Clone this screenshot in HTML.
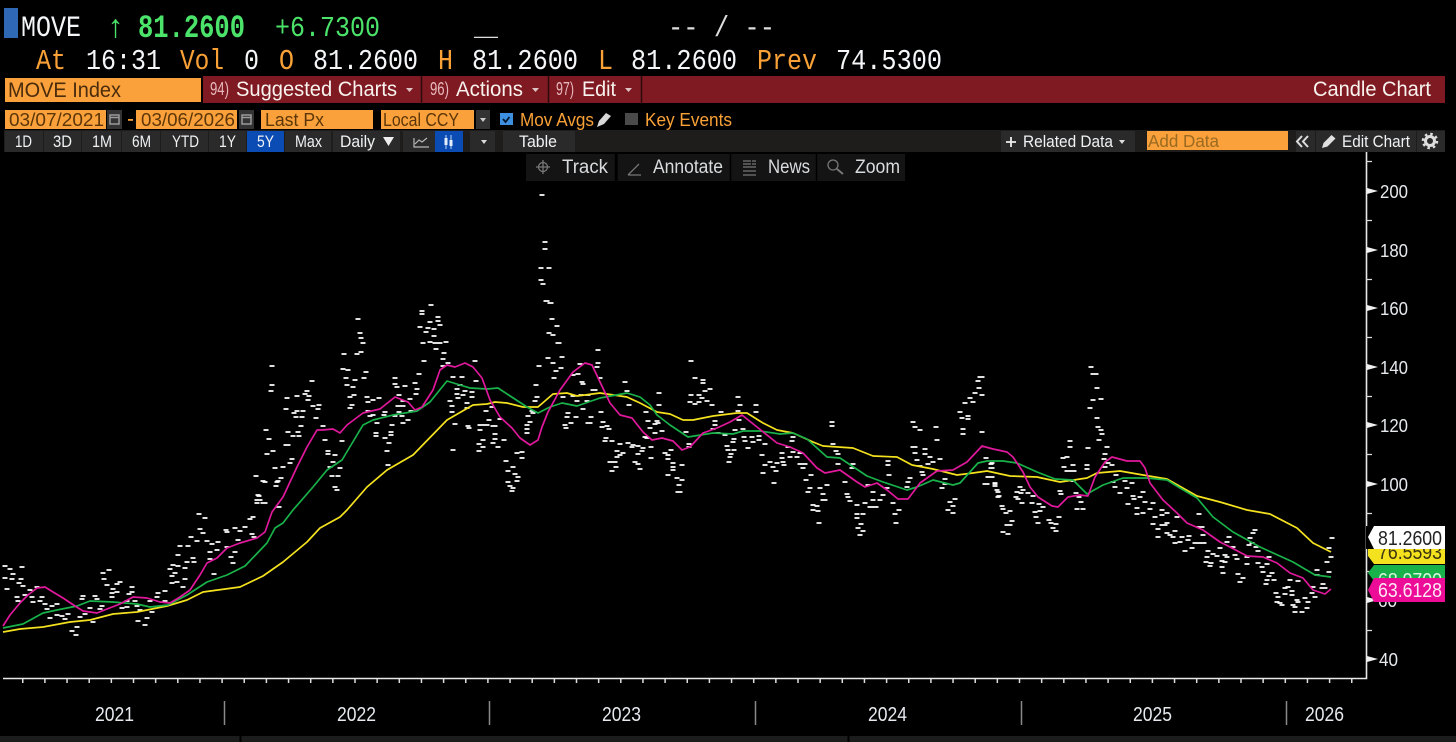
<!DOCTYPE html>
<html><head><meta charset="utf-8"><title>MOVE Index Candle Chart</title>
<style>
html,body{margin:0;padding:0;background:#000;width:1456px;height:742px;overflow:hidden}
svg{display:block;position:absolute;left:0;top:0}
text{white-space:pre}
.m{font-family:"Liberation Mono",monospace;font-size:25px}
.s{font-family:"Liberation Sans",sans-serif}
.o{fill:#f9a137}.w{fill:#f4f6f8}
</style></head><body>
<svg width="1456" height="742" viewBox="0 0 1456 742" xmlns="http://www.w3.org/2000/svg" font-family="Liberation Sans, sans-serif">
<rect width="1456" height="742" fill="#000"/>
<!-- header -->
<rect x="4" y="8" width="14" height="30" fill="#2f68b4"/>
<g class="m">
<text x="21" y="36" class="w" textLength="60" lengthAdjust="spacingAndGlyphs" style="font-size:30px">MOVE</text>
<text x="106" y="37" fill="#4be36a" style="font-size:32px" textLength="19" lengthAdjust="spacingAndGlyphs">↑</text>
<text x="138" y="37" fill="#4be36a" font-weight="bold" style="font-size:32px" textLength="107" lengthAdjust="spacingAndGlyphs">81.2600</text>
<text x="275" y="36" fill="#4be36a" style="font-size:29px" textLength="105" lengthAdjust="spacingAndGlyphs">+6.7300</text>
<text x="474" y="35" fill="#ddd" style="font-size:27px" textLength="24" lengthAdjust="spacingAndGlyphs">__</text>
<text x="668" y="36" fill="#ddd" style="font-size:29px" textLength="107" lengthAdjust="spacingAndGlyphs">-- / --</text>
<g style="font-size:29px">
<text x="36" y="69" class="o" textLength="30" lengthAdjust="spacingAndGlyphs">At</text>
<text x="86" y="69" class="w" textLength="75" lengthAdjust="spacingAndGlyphs">16:31</text>
<text x="180" y="69" class="o" textLength="44" lengthAdjust="spacingAndGlyphs">Vol</text>
<text x="244" y="69" class="w" textLength="15" lengthAdjust="spacingAndGlyphs">0</text>
<text x="279" y="69" class="o" textLength="15" lengthAdjust="spacingAndGlyphs">O</text>
<text x="313" y="69" class="w" textLength="105" lengthAdjust="spacingAndGlyphs">81.2600</text>
<text x="438" y="69" class="o" textLength="15" lengthAdjust="spacingAndGlyphs">H</text>
<text x="472" y="69" class="w" textLength="106" lengthAdjust="spacingAndGlyphs">81.2600</text>
<text x="598" y="69" class="o" textLength="15" lengthAdjust="spacingAndGlyphs">L</text>
<text x="631" y="69" class="w" textLength="106" lengthAdjust="spacingAndGlyphs">81.2600</text>
<text x="757" y="69" class="o" textLength="60" lengthAdjust="spacingAndGlyphs">Prev</text>
<text x="836" y="69" class="w" textLength="106" lengthAdjust="spacingAndGlyphs">74.5300</text>
</g></g>
<!-- red bar -->
<rect x="5" y="78" width="196" height="24" fill="#fba13b"/>
<rect x="203" y="76" width="1242" height="27" fill="#7f1a22"/>
<path d="M421.500 76v27M548.500 76v27M641.500 76v27" stroke="#2a0a0e" stroke-width="1.500"/>
<text x="8" y="97" font-size="21" fill="#4a2c0c" textLength="113" lengthAdjust="spacingAndGlyphs">MOVE Index</text>
<g font-size="18" fill="#e7b9bd">
<text x="210" y="95" textLength="19" lengthAdjust="spacingAndGlyphs">94)</text>
<text x="430" y="95" textLength="19" lengthAdjust="spacingAndGlyphs">96)</text>
<text x="556" y="95" textLength="18" lengthAdjust="spacingAndGlyphs">97)</text>
</g>
<g font-size="21.500" fill="#f8f3ee">
<text x="236" y="96" textLength="161" lengthAdjust="spacingAndGlyphs">Suggested Charts</text>
<text x="456" y="96" textLength="67" lengthAdjust="spacingAndGlyphs">Actions</text>
<text x="582" y="96" textLength="34" lengthAdjust="spacingAndGlyphs">Edit</text>
<text x="1313" y="96" textLength="118" lengthAdjust="spacingAndGlyphs">Candle Chart</text>
</g>
<path d="M406 88h7l-3.500 4zM532 88h7l-3.500 4zM625 88h7l-3.500 4z" fill="#ddc5c5"/>
<!-- row 3 -->
<rect x="5" y="110" width="101" height="19" fill="#fba13b"/>
<rect x="136" y="110" width="101" height="19" fill="#fba13b"/>
<rect x="261" y="110" width="112" height="19" fill="#fba13b"/>
<rect x="381" y="110" width="93" height="19" fill="#fba13b"/>
<g fill="#333"><rect x="107" y="110" width="15" height="19"/><rect x="239" y="110" width="15" height="19"/><rect x="476" y="110" width="14" height="19"/></g>
<path d="M110 115h9v9h-9zM110 117.500h9M242 115h9v9h-9zM242 117.500h9" stroke="#9a9a9a" stroke-width="1.500" fill="none"/>
<path d="M480 118h6l-3 4z" fill="#ccc"/>
<rect x="128" y="119" width="5" height="1.800" fill="#f9a137"/>
<g font-size="18" fill="#5c3608">
<text x="9" y="126" textLength="95" lengthAdjust="spacingAndGlyphs">03/07/2021</text>
<text x="141" y="126" textLength="94" lengthAdjust="spacingAndGlyphs">03/06/2026</text>
<text x="265" y="126" textLength="59" lengthAdjust="spacingAndGlyphs">Last Px</text>
<text x="383" y="126" textLength="76" lengthAdjust="spacingAndGlyphs">Local CCY</text>
</g>
<rect x="500" y="113" width="13" height="12" fill="#3d8fe0"/>
<path d="M503 119l2.500 3 4-5" stroke="#04162c" stroke-width="1.800" fill="none"/>
<text x="520" y="126" font-size="18" fill="#f9a137" textLength="74" lengthAdjust="spacingAndGlyphs">Mov Avgs</text>
<path d="M597 127l2-6 7-8 5 3-7 8z" fill="#d8d8d8"/>
<rect x="625" y="113" width="13" height="12" fill="#4a4a4a"/>
<text x="645" y="126" font-size="18" fill="#f9a137" textLength="87" lengthAdjust="spacingAndGlyphs">Key Events</text>
<!-- row 4 -->
<rect x="4" y="130" width="1441" height="22" fill="#1f1d1b"/>
<g fill="#2a2a2a">
<rect x="5" y="131" width="38" height="21"/><rect x="44" y="131" width="37" height="21"/><rect x="82" y="131" width="39" height="21"/><rect x="122" y="131" width="38" height="21"/><rect x="161" y="131" width="47" height="21"/><rect x="209" y="131" width="37" height="21"/><rect x="285" y="131" width="46" height="21"/><rect x="333" y="131" width="67" height="21"/><rect x="403" y="131" width="32" height="21"/><rect x="470" y="131" width="25" height="21"/><rect x="503" y="131" width="72" height="21"/><rect x="1001" y="131" width="134" height="21"/><rect x="1296" y="131" width="19" height="21"/><rect x="1316" y="131" width="100" height="21"/><rect x="1417" y="131" width="28" height="21"/>
</g>
<rect x="247" y="131" width="37" height="21" fill="#0b4cb4"/>
<rect x="435" y="131" width="28" height="21" fill="#0b4cb4"/>
<g font-size="17" fill="#f0f2f4" text-anchor="start">
<text x="15" y="147" textLength="17" lengthAdjust="spacingAndGlyphs">1D</text>
<text x="53" y="147" textLength="19" lengthAdjust="spacingAndGlyphs">3D</text>
<text x="92" y="147" textLength="20" lengthAdjust="spacingAndGlyphs">1M</text>
<text x="132" y="147" textLength="19" lengthAdjust="spacingAndGlyphs">6M</text>
<text x="172" y="147" textLength="27" lengthAdjust="spacingAndGlyphs">YTD</text>
<text x="219" y="147" textLength="17" lengthAdjust="spacingAndGlyphs">1Y</text>
<text x="257" y="147" textLength="17" lengthAdjust="spacingAndGlyphs">5Y</text>
<text x="295" y="147" textLength="27" lengthAdjust="spacingAndGlyphs">Max</text>
<text x="340" y="147" textLength="35" lengthAdjust="spacingAndGlyphs">Daily</text>
<text x="519" y="147" textLength="38" lengthAdjust="spacingAndGlyphs">Table</text>
<text x="1023" y="147" textLength="90" lengthAdjust="spacingAndGlyphs">Related Data</text>
<text x="1342" y="147" textLength="68" lengthAdjust="spacingAndGlyphs">Edit Chart</text>
</g>
<path d="M383 137h11l-5.500 9z" fill="#eee"/>
<path d="M414 138v9h15M415 144l4-4 3 2 5-4" stroke="#b8b8b8" stroke-width="1.200" fill="none"/>
<path d="M446 135v14M451 135v14" stroke="#b9d3f2" stroke-width="1"/><rect x="444.500" y="138" width="3" height="7" fill="#e6eefb"/><rect x="449.500" y="140" width="3" height="6" fill="#e6eefb"/>
<path d="M481 140h6l-3 4zM1119 140h6l-3 4z" fill="#ddd"/>
<path d="M1006 142h10M1011 137v10" stroke="#eee" stroke-width="1.800"/>
<rect x="1147" y="131" width="141" height="19" fill="#fba13b"/>
<text x="1148" y="147" font-size="17.500" fill="#9a6a20" textLength="71" lengthAdjust="spacingAndGlyphs">Add Data</text>
<path d="M1302 136l-5 5.500 5 5.500M1308 136l-5 5.500 5 5.500" stroke="#ddd" stroke-width="2" fill="none"/>
<path d="M1322 148l1.500-5 8-8 4 3.500-8 8z" fill="#e0e0e0"/>
<circle cx="1430" cy="141" r="4.500" fill="none" stroke="#ddd" stroke-width="3"/>
<circle cx="1430" cy="141" r="7" fill="none" stroke="#ddd" stroke-width="2.500" stroke-dasharray="2.500 3"/>
<!-- track row -->
<rect x="526" y="154" width="379" height="27" fill="#141414"/>
<path d="M615.500 154v27M617 154v27M730.500 154v27M816.500 154v27" stroke="#000" stroke-width="1.500"/>
<g font-size="19" fill="#d9dcdf">
<text x="562" y="173" textLength="46" lengthAdjust="spacingAndGlyphs">Track</text>
<text x="653" y="173" textLength="70" lengthAdjust="spacingAndGlyphs">Annotate</text>
<text x="768" y="173" textLength="42" lengthAdjust="spacingAndGlyphs">News</text>
<text x="855" y="173" textLength="45" lengthAdjust="spacingAndGlyphs">Zoom</text>
</g>
<g stroke="#777" fill="none" stroke-width="1.300">
<circle cx="543" cy="167" r="4.500"/><path d="M536 167h14M543 160v14"/>
<path d="M628 175l11-11M628 175h13"/>
<path d="M743 161h8M743 164h8M743 167h13M743 171h13M743 175h13M752 161h4M752 164h4"/>
<circle cx="833" cy="165" r="5"/><path d="M837 169l6 5" stroke-width="2"/>
</g>
<!-- axes -->
<path d="M3 678.500H1366.500V152" stroke="#e8e8e8" stroke-width="1.600" fill="none"/>
<line x1="22" y1="681" x2="1366" y2="681" stroke="#ddd" stroke-width="4" stroke-dasharray="1.500 20.650"/>
<path d="M224.500 701v24M489.500 701v24M755.500 701v24M1021.500 701v24M1286.500 701v24" stroke="#8a8a8a" stroke-width="1.500"/>
<path d="M1366 161.500h6M1366 220.500h6M1366 279.500h6M1366 337.500h6M1366 396.500h6M1366 454.500h6M1366 513.500h6M1366 571.500h6M1366 630.500h6" stroke="#ddd" stroke-width="1.300"/>
<path d="M1367 188l11 3-11 3zM1367 247l11 3-11 3zM1367 305l11 3-11 3zM1367 364l11 3-11 3zM1367 422l11 3-11 3zM1367 481l11 3-11 3zM1367 539l11 3-11 3zM1367 597l11 3-11 3zM1367 656l11 3-11 3z" fill="#f0f0f0"/>
<g font-size="18.500" fill="#e6e9ee">
<text x="1380" y="198" textLength="28" lengthAdjust="spacingAndGlyphs">200</text>
<text x="1380" y="257" textLength="28" lengthAdjust="spacingAndGlyphs">180</text>
<text x="1380" y="315" textLength="28" lengthAdjust="spacingAndGlyphs">160</text>
<text x="1380" y="374" textLength="28" lengthAdjust="spacingAndGlyphs">140</text>
<text x="1380" y="432" textLength="28" lengthAdjust="spacingAndGlyphs">120</text>
<text x="1380" y="491" textLength="28" lengthAdjust="spacingAndGlyphs">100</text>
<text x="1378" y="607" textLength="19" lengthAdjust="spacingAndGlyphs">60</text>
<text x="1379" y="666" textLength="19" lengthAdjust="spacingAndGlyphs">40</text>
</g>
<g font-size="20" fill="#e6e9ee">
<text x="95" y="721" textLength="39" lengthAdjust="spacingAndGlyphs">2021</text>
<text x="337" y="721" textLength="39" lengthAdjust="spacingAndGlyphs">2022</text>
<text x="602" y="721" textLength="39" lengthAdjust="spacingAndGlyphs">2023</text>
<text x="868" y="721" textLength="39" lengthAdjust="spacingAndGlyphs">2024</text>
<text x="1133" y="721" textLength="39" lengthAdjust="spacingAndGlyphs">2025</text>
<text x="1305" y="721" textLength="39" lengthAdjust="spacingAndGlyphs">2026</text>
</g>
<!-- candle dashes -->
<path transform="translate(-2.500 0)" stroke="#fff" stroke-width="1.700" fill="none" d="M5 566h5M10 569h5M22 567h5M13 574h5M5 578h5M12 579h5M21 579h5M7 589h5M19 583h5M23 586h5M30 590h5M25 595h5M17 597h5M18 601h5M32 597h5M42 597h5M40 601h5M33 602h5M37 587h5M45 604h5M52 606h5M57 604h5M47 609h5M50 618h5M57 615h5M62 616h5M68 614h5M65 619h5M72 631h5M77 627h5M76 635h5M80 617h5M85 614h5M82 599h5M83 596h5M95 596h5M97 599h5M90 608h5M102 606h5M100 609h5M93 622h5M103 573h5M109 570h5M104 579h5M107 585h5M120 582h5M117 584h5M113 589h5M117 592h5M112 593h5M112 597h5M122 608h5M127 607h5M132 587h5M132 592h5M129 594h5M135 601h5M127 601h5M137 606h5M140 610h5M138 621h5M147 618h5M145 625h5M150 601h5M152 612h5M157 597h5M158 593h5M165 591h5M165 601h5M172 583h5M170 569h5M173 565h5M178 566h5M185 568h5M172 576h5M175 573h5M177 582h5M185 579h5M183 587h5M178 555h5M180 546h5M188 546h5M187 562h5M193 558h5M194 562h5M191 537h5M197 541h5M200 529h5M203 533h5M199 514h5M205 518h5M207 541h5M212 544h5M218 542h5M210 552h5M210 559h5M214 574h5M217 550h5M227 547h5M235 552h5M231 557h5M233 563h5M226 530h5M227 532h5M235 528h5M240 531h5M245 527h5M250 519h5M253 517h5M252 534h5M254 537h5M238 540h5M258 495h5M260 500h5M257 503h5M265 503h5M265 482h5M277 482h5M276 486h5M279 507h5M335 487h5M337 490h5
M256 476h5M263 481h5M259 496h5M257 500h5M263 503h5M272 366h5M272 385h5M271 391h5M266 430h5M269 439h5M273 451h5M267 454h5M275 468h5M283 467h5M290 463h5M292 459h5M286 445h7M281 478h5M278 481h5M276 486h5M286 409h5M287 398h5M297 396h5M307 391h5M305 394h5M309 396h5M308 400h5M312 381h5M313 406h5M319 405h5M318 409h5M316 418h5M297 411h5M303 411h5M294 413h5M296 417h5M302 417h5M301 426h5M288 432h5M298 432h5M293 436h5M299 436h5M323 426h5M325 440h5M342 441h5M328 451h5M328 454h5M335 455h5M333 462h5M340 468h5M330 467h5M332 476h5M338 476h5M335 487h5M337 490h5M344 354h5M358 319h5M360 333h5M361 338h5M363 343h5M361 352h5M357 354h5M343 369h5M348 370h5M366 372h5M364 378h5M346 378h5M355 380h5M347 385h5M353 387h5M354 395h5M350 397h5M352 405h5M350 408h5M367 397h5M373 400h5M368 402h5M379 398h5M368 411h5M373 415h5M370 416h5M376 433h5M376 436h5M385 438h5M391 432h5M391 435h5M389 443h5M387 451h5M388 465h5M377 423h5M392 425h5M385 412h5M384 415h5M395 378h5M395 384h5M397 387h5M405 386h5M415 383h5M419 374h5M417 389h5M416 394h5M399 395h5M410 399h5M403 401h5M398 406h5M403 406h5M411 411h5M399 412h5M395 416h5M402 416h5M408 420h5M403 423h5
M431 305h5M422 311h5M422 314h5M438 317h5M430 322h5M438 321h5M440 325h5M420 327h5M428 328h5M426 332h5M434 329h5M434 336h5M423 343h5M430 342h5M435 343h10M446 342h5M436 349h5M444 353h5M443 359h5M424 361h5M448 363h5M475 361h5M443 366h5M453 377h5M462 377h5M476 381h5M460 385h5M457 389h5M465 391h5M472 392h5M457 394h5M463 395h5M458 398h5M472 397h5M450 401h5M467 403h5M452 406h5M467 408h5M492 407h5M452 412h5M486 411h5M455 424h5M468 426h5M469 428h5M480 425h8M487 425h5M493 426h7M489 420h5M500 419h5M480 430h5M495 434h5M483 440h5M495 439h5M504 440h5M493 443h5M479 444h5M483 447h5M498 447h5M479 451h5M453 450h5M522 452h5M517 453h5M522 458h5M506 461h5M513 467h5M508 471h5M515 474h5M518 477h5M517 481h5M508 482h5M510 486h5M513 488h5M512 491h5M527 425h5M527 429h5M527 433h5M530 422h5M528 416h5M533 413h5M532 411h5M535 401h5M537 397h5M536 385h5M539 366h5
M548 358h5M553 363h5M562 357h5M561 368h5M556 371h5M554 378h5M547 301h5M551 303h5M552 319h5M557 326h5M549 333h5M553 335h5M558 343h6M598 350h5M580 364h5M598 363h5M578 374h5M582 382h5M583 384h5M593 390h7M573 396h5M581 395h5M588 395h5M563 397h5M577 401h5M587 401h5M583 409h5M568 413h5M567 417h5M576 417h5M591 417h5M571 423h5M588 423h7M565 425h5M566 428h5M542 195h5M545 242h5M545 249h5M541 268h5M549 268h5M541 280h5M543 284h5M546 301h5M550 303h5M539 366h5M553 363h5M597 367h5M573 375h5M600 378h5M625 382h5M627 391h5M536 385h5M537 397h5
M691 361h5M695 378h5M703 380h5M703 383h5M659 393h5M659 405h5M629 405h5M646 412h5M648 421h5M657 421h5M655 424h5M658 423h5M662 431h5M655 433h5M650 428h5M645 437h5M647 438h5M603 422h5M602 427h5M607 426h5M609 429h5M601 412h5M606 438h5M605 441h5M612 441h5M620 444h5M628 443h5M633 445h5M632 447h5M638 446h5M643 448h5M642 451h5M638 454h5M651 447h5M651 458h5M617 451h5M623 453h5M620 455h5M617 457h5M615 462h5M610 462h5M612 471h5M616 467h5M635 462h5M638 464h5M640 469h5M665 453h5M668 455h5M671 450h5M668 459h5M673 463h5M673 467h5M673 470h5M668 475h5M682 465h5M677 478h5M682 480h5M679 485h5M678 492h7M689 444h5M689 447h5M686 432h5M691 395h5M699 395h5M690 402h5M695 404h5M699 402h5M702 398h5M707 401h5M712 405h5M705 391h5M710 389h5M721 412h5M715 421h5M715 425h5M713 429h5M718 433h5M725 435h5M734 439h5M733 442h5M727 446h5M728 450h5M734 450h5M731 454h5M730 457h5M729 462h5M735 430h5M738 397h5M740 405h5M738 411h5M739 420h5M743 429h5M756 405h5M756 412h5M744 437h5M752 437h5M759 436h5M745 441h5M753 442h5M759 440h5M748 448h5M765 444h5M762 455h5M770 462h5M777 463h5M765 465h5M773 467h5M763 473h5M776 471h5M774 483h5M782 453h5M782 458h5M783 462h5M784 465h5M793 437h5M792 441h5M788 447h5M793 452h5M797 457h5M790 457h5M800 453h5M800 464h5M805 464h5M803 468h5M811 475h5M806 480h5M810 488h5M808 492h5M827 485h5M820 488h5M823 494h5M823 500h7M813 505h5M817 506h5M813 510h5M818 511h5M819 523h5M832 422h5M832 426h5M833 444h5M836 451h5M838 454h5M838 464h5M845 482h5M847 494h5M848 497h5M853 464h5M852 468h5M850 501h5M857 505h5M865 503h5M873 500h5M880 500h5M870 507h8M876 507h5M857 514h5M863 514h5M857 518h5M861 524h5M858 528h5M863 531h5M860 535h5M868 485h5M873 492h5M883 495h5M887 488h5M888 461h5M888 465h5M889 475h5M893 503h5M899 510h5M895 514h5M896 523h5M910 478h5M908 482h5M907 487h5M913 422h5M915 427h5M920 430h5M936 427h5M937 440h5M913 447h7M925 449h5M925 454h5M915 453h5M930 457h5M917 460h5M940 459h5M933 462h5M928 464h5M920 466h5M922 472h5M923 475h5M945 479h5M945 484h5M942 488h5M955 499h5M950 502h5M953 506h5M948 510h5M953 513h5M980 377h5M978 381h5M979 388h5M975 393h5M982 395h5M970 398h5M973 402h5M965 403h5M960 412h5M968 416h5M962 418h5M968 419h5M963 429h5M963 434h5M982 432h5M986 458h5M991 464h5M992 468h5M988 477h7M987 484h5M995 484h5M998 492h5M998 497h5
M1091 367h5M1093 374h8M1097 388h5M1093 400h5M1101 399h5M1090 408h5M1097 418h5M1098 427h5M1101 430h5M1102 434h5M1099 440h5M1088 448h5M1107 447h5M1105 454h5M1104 459h5M1108 463h5M1112 465h5M1105 467h5M1070 441h5M1070 447h5M1067 457h5M1063 458h5M1064 467h5M1073 465h5M1067 471h12M1087 465h5M1087 469h5M982 377h5M982 395h5M982 432h5M986 458h5M992 463h5M991 468h5M989 477h8M985 484h5M995 483h5M995 486h5M997 490h5M999 496h5M1002 506h5M1003 509h5M1010 511h5M1006 513h5M1012 521h5M1007 525h8M1003 532h5M1008 534h5M1020 487h5M1023 490h5M1017 492h5M1021 493h5M1016 497h5M1018 499h5M1022 503h5M1028 493h5M1033 496h5M1032 503h5M1039 504h5M1043 507h5M1040 511h5M1035 512h5M1036 517h5M1038 523h5M1049 520h5M1051 523h5M1056 524h5M1053 528h5M1056 531h5M1059 517h5M1060 491h5M1061 494h5M1073 481h5M1076 493h5M1079 497h5M1081 502h5M1077 509h5M1083 509h5M1116 475h5M1113 482h5M1125 481h5M1132 483h5M1115 487h5M1127 488h5M1120 493h5M1133 496h5M1143 492h5M1140 497h5M1134 499h5M1145 502h5M1153 503h5M1128 504h5M1137 508h5M1150 509h5M1143 513h5M1137 514h5M1162 510h5M1167 513h5M1162 515h5M1177 517h5M1155 517h5M1162 525h8M1167 523h5M1153 524h5M1158 529h5M1167 533h5M1175 531h5M1170 535h5M1158 537h5M1173 537h5M1182 537h5M1189 536h5M1188 540h5M1180 542h5M1175 543h5M1195 543h9M1204 543h5M1192 548h5M1185 551h5M1199 514h5M1199 527h8M1203 535h5M1255 530h5M1253 533h5M1229 537h5M1227 542h5M1250 538h5M1252 543h5M1249 545h5M1256 547h5M1258 551h5M1208 551h5M1213 554h5M1220 548h5M1233 547h5M1207 557h5M1217 556h5M1225 555h5M1227 557h5M1222 561h5M1235 555h5M1237 559h5M1206 562h5M1211 563h5M1210 566h5M1225 562h5M1222 567h5M1223 573h5M1247 557h5M1247 564h5M1238 574h5M1243 578h5M1240 582h5M1258 563h5M1262 567h5M1267 564h5M1269 557h5M1263 572h5M1272 573h5M1269 576h5M1267 580h5M1274 580h5M1266 584h5M1290 580h5M1298 581h5M1288 587h5M1285 588h5M1276 593h5M1285 594h5M1292 591h5M1292 595h5M1278 597h5M1297 600h5M1277 602h5M1280 603h5M1282 605h5M1293 605h5M1305 598h5M1308 602h5M1298 602h5M1307 608h5M1295 607h5M1302 612h5M1295 612h5M1313 587h5M1323 584h5M1322 588h8M1312 593h5M1315 597h5M1317 570h5M1317 575h5M1329 572h5M1327 562h5M1331 557h5M1329 548h5M1332 538h5"/>
<!-- moving averages -->
<g fill="none" stroke-width="1.700" stroke-linejoin="round">
<polyline stroke="#f4e21f" points="3,632 20,629 43,627 70,622 90,620 113,614 137,612 167,606 187,600 203,592 240,587 263,576 283,562 307,542 320,528 340,517 347,510 367,487 387,470 413,455 447,420 473,405 487,404 495,402 507,403 523,407 538,407 553,394 567,393 577,396 600,393 627,397 640,403 657,412 670,414 683,420 693,420 713,416 737,413 747,413 763,423 777,430 793,433 813,442 823,446 853,448 873,456 897,457 912,465 933,469 957,475 973,473 987,471 1010,476 1037,477 1060,482 1087,478 1097,473 1120,471 1143,475 1167,479 1197,496 1220,502 1247,510 1270,514 1297,528 1313,543 1331,552"/>
<polyline stroke="#19b24a" points="3,628 23,624 43,613 57,610 77,606 90,601 113,602 137,604 150,607 168,605 187,595 207,582 227,575 245,566 267,543 275,528 283,523 293,510 313,487 327,470 342,460 363,425 373,420 393,415 417,411 430,402 447,381 460,385 470,388 487,389 498,388 527,407 538,413 550,407 562,403 577,406 600,398 627,393 640,397 650,405 657,415 670,425 688,437 713,433 733,434 743,431 760,431 780,434 793,433 807,439 827,457 840,458 867,476 883,482 907,490 917,487 933,480 953,485 960,483 978,463 987,461 1003,461 1017,463 1037,472 1055,479 1073,480 1087,494 1103,485 1123,478 1147,478 1167,480 1180,488 1197,498 1213,517 1233,532 1260,547 1293,562 1315,575 1331,577"/>
<polyline stroke="#e0189c" points="3,626 10,615 20,603 28,595 37,588 45,587 53,592 63,598 75,606 83,611 97,613 107,609 120,604 133,597 147,598 160,602 170,603 180,597 190,590 200,575 207,563 217,558 227,548 240,543 257,538 265,532 272,512 283,497 297,467 307,447 317,430 322,430 333,429 340,433 347,425 363,413 380,409 395,397 408,402 415,410 422,407 433,390 440,370 447,365 455,367 465,363 473,367 482,378 490,400 500,417 512,428 520,438 530,445 538,440 542,427 548,412 560,390 573,372 585,363 592,365 600,382 610,403 620,415 632,418 643,432 652,440 662,438 673,441 682,450 690,447 703,433 717,428 730,422 742,415 757,427 777,443 790,447 803,453 817,468 825,473 840,470 857,482 865,487 877,483 887,490 898,499 908,499 920,483 937,471 953,470 967,462 982,446 993,449 1007,452 1013,457 1023,472 1030,487 1038,497 1052,506 1058,507 1068,497 1080,495 1088,496 1095,477 1105,462 1112,457 1127,461 1140,461 1145,468 1150,483 1163,500 1177,513 1187,523 1203,530 1220,542 1230,547 1247,556 1263,557 1277,563 1290,573 1303,578 1313,590 1325,594 1331,589"/>
</g>
<!-- last value tags -->
<path d="M1368 547h77v17h-71l-6-8z" fill="#f4e21f"/>
<text x="1378" y="559" font-size="20" fill="#3a3410" textLength="64" lengthAdjust="spacingAndGlyphs">76.5593</text>
<rect x="1366" y="526" width="80" height="23" fill="#000"/>
<path d="M1368 537l6-11h71v23h-71z" fill="#fff"/>
<text x="1378" y="545" font-size="20" fill="#222" textLength="64" lengthAdjust="spacingAndGlyphs">81.2600</text>
<path d="M1368 573l6-8h71v16h-71z" fill="#19b24a"/>
<text x="1378" y="587" font-size="20" fill="#d8f5e0" textLength="64" lengthAdjust="spacingAndGlyphs">68.9700</text>
<path d="M1368 590l6-12h71v24h-71z" fill="#ec0c98"/>
<text x="1378" y="597" font-size="20" fill="#fde6f4" textLength="64" lengthAdjust="spacingAndGlyphs">63.6128</text>
<!-- bottom strip -->
<rect x="0" y="736" width="1456" height="6" fill="#1c1c1c"/>
<path d="M240.500 736v6M848.500 736v6" stroke="#000" stroke-width="2"/>
</svg>
</body></html>
